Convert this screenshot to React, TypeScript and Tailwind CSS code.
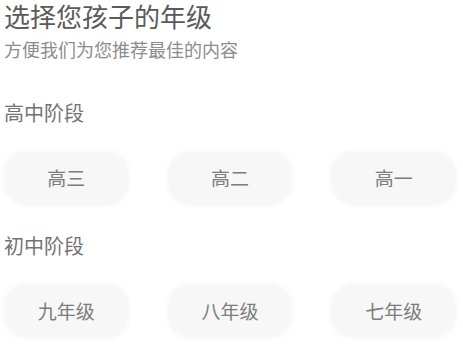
const senior = ["高三", "高二", "高一"];
const junior = ["九年级", "八年级", "七年级"];

function GradeRow({ items }: { items: string[] }) {
  return (
    <div className="grid grid-cols-3 gap-[41px] pl-[5px] pr-[8px]">
      {items.map((g) => (
        <button
          key={g}
          className="h-[52px] rounded-[22px] bg-[#f7f7f7] text-[19px] text-[#7c7c7c] shadow-[0_0_4px_2px_#f7f7f7]"
        >
          {g}
        </button>
      ))}
    </div>
  );
}

export default function App() {
  return (
    <div
      className="w-[463px] h-[351px] overflow-hidden bg-white px-[4px] pt-[1px]"
      style={{ fontFamily: '"Noto Sans CJK SC", "Noto Sans", sans-serif' }}
    >
      <h1 className="text-[26px] leading-[30px] text-[#5a5a5a]">选择您孩子的年级</h1>
      <p className="text-[18px] leading-[22px] text-[#8c8c8c] mt-[7px]">方便我们为您推荐最佳的内容</p>

      <h2 className="text-[20px] leading-[24px] text-[#737373] mt-[41px]">高中阶段</h2>
      <div className="mt-[27px] -mx-[4px]">
        <GradeRow items={senior} />
      </div>

      <h2 className="text-[20px] leading-[24px] text-[#737373] mt-[30px]">初中阶段</h2>
      <div className="mt-[27px] -mx-[4px]">
        <GradeRow items={junior} />
      </div>
    </div>
  );
}
